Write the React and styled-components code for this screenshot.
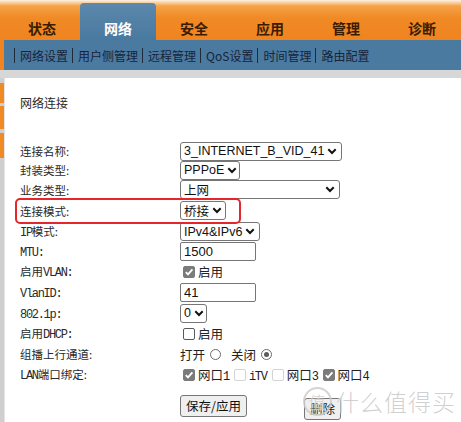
import React from "react";
import styled, { createGlobalStyle, css } from "styled-components";

const Global = createGlobalStyle`
  html, body { margin: 0; padding: 0; background: #fff; }
  body { font-family: "Noto Sans CJK SC", "Liberation Sans", sans-serif; }
`;

const Page = styled.div`
  position: relative;
  width: 461px;
  height: 422px;
  overflow: hidden;
  background: #fff;
`;

const Top = styled.div`
  background: linear-gradient(#fdf2e6 0px, #f5a347 6px, #f08a25 18px, #ef8420 40px);
`;

const Tabs = styled.div`
  display: flex;
  height: 40px;
  padding-left: 4px;
`;

const Tab = styled.div`
  width: 76px;
  display: flex;
  align-items: flex-end;
  justify-content: center;
  padding-bottom: 2px;
  box-sizing: border-box;
  font-size: 14px;
  font-weight: bold;
  color: #3a1c02;
  ${(p) =>
    p.$active &&
    css`
      margin-top: 3px;
      border-radius: 4px 4px 0 0;
      background: linear-gradient(#5b88ab, #4a79a0);
      color: #fff;
    `}
`;

const SubNav = styled.div`
  margin-left: 4px;
  height: 30px;
  background: #4b7aa0;
  display: flex;
  align-items: center;
  padding-left: 10px;
`;

const SubItem = styled.div`
  border-left: 1px solid #1d2b3a;
  padding: 0 4px 0 5px;
  font-size: 12px;
  line-height: 15px;
  color: #17243a;
`;

const Band = styled.div`
  height: 8px;
  background: #d7d7d7;
`;

const Body = styled.div`
  display: flex;
  height: 344px;
`;

const Strip = styled.div`
  width: 4px;
  background: #cfcfcf;
  border-right: 1px solid #e4e4e4;
  display: flex;
  flex-direction: column;
`;

const Seg = styled.div`
  margin-top: ${(p) => p.$gap}px;
  height: ${(p) => p.$h}px;
  background: #ef8a24;
`;

const Content = styled.div`
  flex: 1;
  padding: 13.5px 0 0 15px;
  color: #2a2a2a;
`;

const Title = styled.div`
  font-size: 12px;
  line-height: 20px;
  height: 50px;
  padding-top: 1px;
  box-sizing: border-box;
`;

const Row = styled.div`
  display: flex;
  align-items: center;
  height: ${(p) => p.$h || 20}px;
  ${(p) =>
    p.$marked &&
    css`
      width: 219px;
      margin-left: -3px;
      padding-left: 3px;
      box-sizing: content-box;
      outline: 2px solid #e5262b;
      border-radius: 3px;
    `}
`;

const Label = styled.div`
  width: 160px;
  flex: none;
  font-size: 11.5px;
  color: #2a2a2a;
`;

const Lat = styled.span`
  font-family: "Liberation Mono", monospace;
  font-size: 12px;
  letter-spacing: -1.3px;
`;

const Select = styled.div`
  width: ${(p) => p.$w}px;
  height: 19px;
  box-sizing: border-box;
  border: 1px solid #767676;
  border-radius: 3px;
  background: #fff;
  display: flex;
  align-items: center;
  justify-content: space-between;
  gap: 3px;
  padding: 0 4px 0 3px;
  font-family: "Liberation Sans", "Noto Sans CJK SC", sans-serif;
  font-size: 12.5px;
  color: #111;
  white-space: nowrap;
`;

const Input = styled.input`
  width: 76px;
  height: 19px;
  box-sizing: border-box;
  border: 1px solid #767676;
  border-radius: 2px;
  padding: 0 3px;
  font-family: "Liberation Sans", sans-serif;
  font-size: 13px;
  color: #111;
  outline: none;
`;

const Choice = styled.div`
  display: flex;
  align-items: center;
  gap: 3px;
  font-size: 12.5px;
  color: #222;
  margin-left: ${(p) => (p.$flush ? 0 : 3)}px;
`;

const Text = styled.span`
  white-space: nowrap;
`;

const Box = styled.span`
  width: 12px;
  height: 12px;
  box-sizing: border-box;
  border-radius: 2px;
  display: inline-flex;
  align-items: center;
  justify-content: center;
  margin-left: ${(p) => p.$ml || 0}px;
  ${(p) =>
    p.$checked
      ? css`
          background: #7b7b7b;
          border: 1px solid #7b7b7b;
        `
      : css`
          background: #fff;
          border: 1px solid ${p.$dim ? "#d4d4d4" : "#5a5a5a"};
        `}
`;

const Radio = styled.span`
  width: 11px;
  height: 11px;
  box-sizing: border-box;
  border-radius: 50%;
  border: 1px solid #6a6a6a;
  display: inline-flex;
  align-items: center;
  justify-content: center;
  margin: 0 7px 0 2px;
  &::after {
    content: "";
    width: 5px;
    height: 5px;
    border-radius: 50%;
    background: ${(p) => (p.$on ? "#5a5a5a" : "transparent")};
  }
`;

const Buttons = styled.div`
  display: flex;
  align-items: flex-start;
  margin-top: 10px;
  padding-left: 160px;
`;

const Button = styled.button`
  height: 22px;
  margin-top: ${(p) => p.$mt || 0}px;
  margin-left: ${(p) => p.$ml || 0}px;
  padding: 0 5px;
  background: #efefef;
  border: 1px solid #767676;
  border-radius: 3px;
  font-family: "Noto Sans CJK SC", sans-serif;
  font-size: 12.5px;
  line-height: 18px;
  color: #111;
`;

const Watermark = styled.div`
  position: absolute;
  left: 303px;
  top: 384px;
  display: flex;
  align-items: center;
  gap: 4px;
  color: rgba(200, 200, 200, 0.85);
  font-size: 23px;
  font-weight: 300;
  letter-spacing: 1px;
  text-shadow: 0 0 2px #fff;
  pointer-events: none;
`;

const Circle = styled.span`
  width: 25px;
  height: 25px;
  border-radius: 50%;
  border: 2px solid rgba(205, 205, 205, 0.85);
  display: inline-flex;
  align-items: center;
  justify-content: center;
  font-size: 17px;
`;

function Chevron() {
  return (
    <svg width="10" height="7" viewBox="0 0 10 7" style={{ flex: "none" }}>
      <path d="M1.3 1.3 L5 5 L8.7 1.3" fill="none" stroke="#111" strokeWidth="2" />
    </svg>
  );
}

function Check({ checked, dim, ml }) {
  return (
    <Box $checked={checked} $dim={dim} $ml={ml}>
      {checked && (
        <svg width="10" height="10" viewBox="0 0 10 10">
          <path d="M1.8 5.2 L4 7.4 L8.4 2.4" fill="none" stroke="#fff" strokeWidth="1.8" />
        </svg>
      )}
    </Box>
  );
}

const tabs = ["状态", "网络", "安全", "应用", "管理", "诊断"];
const subs = ["网络设置", "用户侧管理", "远程管理", "QoS设置", "时间管理", "路由配置"];

export default function App() {
  return (
    <Page>
      <Global />
      <Top>
        <Tabs>
          {tabs.map((t) => (
            <Tab key={t} $active={t === "网络"}>
              {t}
            </Tab>
          ))}
        </Tabs>
        <SubNav>
          {subs.map((s) => (
            <SubItem key={s}>{s}</SubItem>
          ))}
        </SubNav>
      </Top>
      <Band />
      <Body>
        <Strip>
          <Seg $gap={5} $h={20} />
          <Seg $gap={3} $h={23} />
          <Seg $gap={4} $h={25} />
        </Strip>
        <Content>
          <Title>网络连接</Title>
          <Row $h={19}>
            <Label>连接名称:</Label>
            <Select $w={162}>
              3_INTERNET_B_VID_41 <Chevron />
            </Select>
          </Row>
          <Row $h={19}>
            <Label>封装类型:</Label>
            <Select $w={60}>
              PPPoE <Chevron />
            </Select>
          </Row>
          <Row>
            <Label>业务类型:</Label>
            <Select $w={160}>
              上网 <Chevron />
            </Select>
          </Row>
          <Row $h={22} $marked>
            <Label>连接模式:</Label>
            <Select $w={46}>
              桥接 <Chevron />
            </Select>
          </Row>
          <Row>
            <Label>
              <Lat>IP</Lat>模式:
            </Label>
            <Select $w={80}>
              IPv4&amp;IPv6 <Chevron />
            </Select>
          </Row>
          <Row>
            <Label>
              <Lat>MTU:</Lat>
            </Label>
            <Input value="1500" readOnly />
          </Row>
          <Row>
            <Label>
              启用<Lat>VLAN:</Lat>
            </Label>
            <Choice>
              <Check checked />
              <Text>启用</Text>
            </Choice>
          </Row>
          <Row $h={21}>
            <Label>
              <Lat>VlanID:</Lat>
            </Label>
            <Input value="41" readOnly />
          </Row>
          <Row $h={21}>
            <Label>
              <Lat>802.1p:</Lat>
            </Label>
            <Select $w={27}>
              0 <Chevron />
            </Select>
          </Row>
          <Row>
            <Label>
              启用<Lat>DHCP:</Lat>
            </Label>
            <Choice>
              <Check />
              <Text>启用</Text>
            </Choice>
          </Row>
          <Row $h={21}>
            <Label>组播上行通道:</Label>
            <Choice $flush>
              <Text>打开</Text>
              <Radio />
              <Text>关闭</Text>
              <Radio $on />
            </Choice>
          </Row>
          <Row>
            <Label>
              <Lat>LAN</Lat>端口绑定:
            </Label>
            <Choice>
              <Check checked />
              <Text>
                网口<Lat>1</Lat>
              </Text>
              <Check dim ml={2} />
              <Text>
                <Lat>iTV</Lat>
              </Text>
              <Check dim ml={2} />
              <Text>
                网口<Lat>3</Lat>
              </Text>
              <Check checked ml={2} />
              <Text>
                网口<Lat>4</Lat>
              </Text>
            </Choice>
          </Row>
          <Buttons>
            <Button>保存/应用</Button>
            <Button $ml={57} $mt={3}>
              删除
            </Button>
          </Buttons>
        </Content>
      </Body>
      <Watermark>
        <Circle>值</Circle>
        什么值得买
      </Watermark>
    </Page>
  );
}
